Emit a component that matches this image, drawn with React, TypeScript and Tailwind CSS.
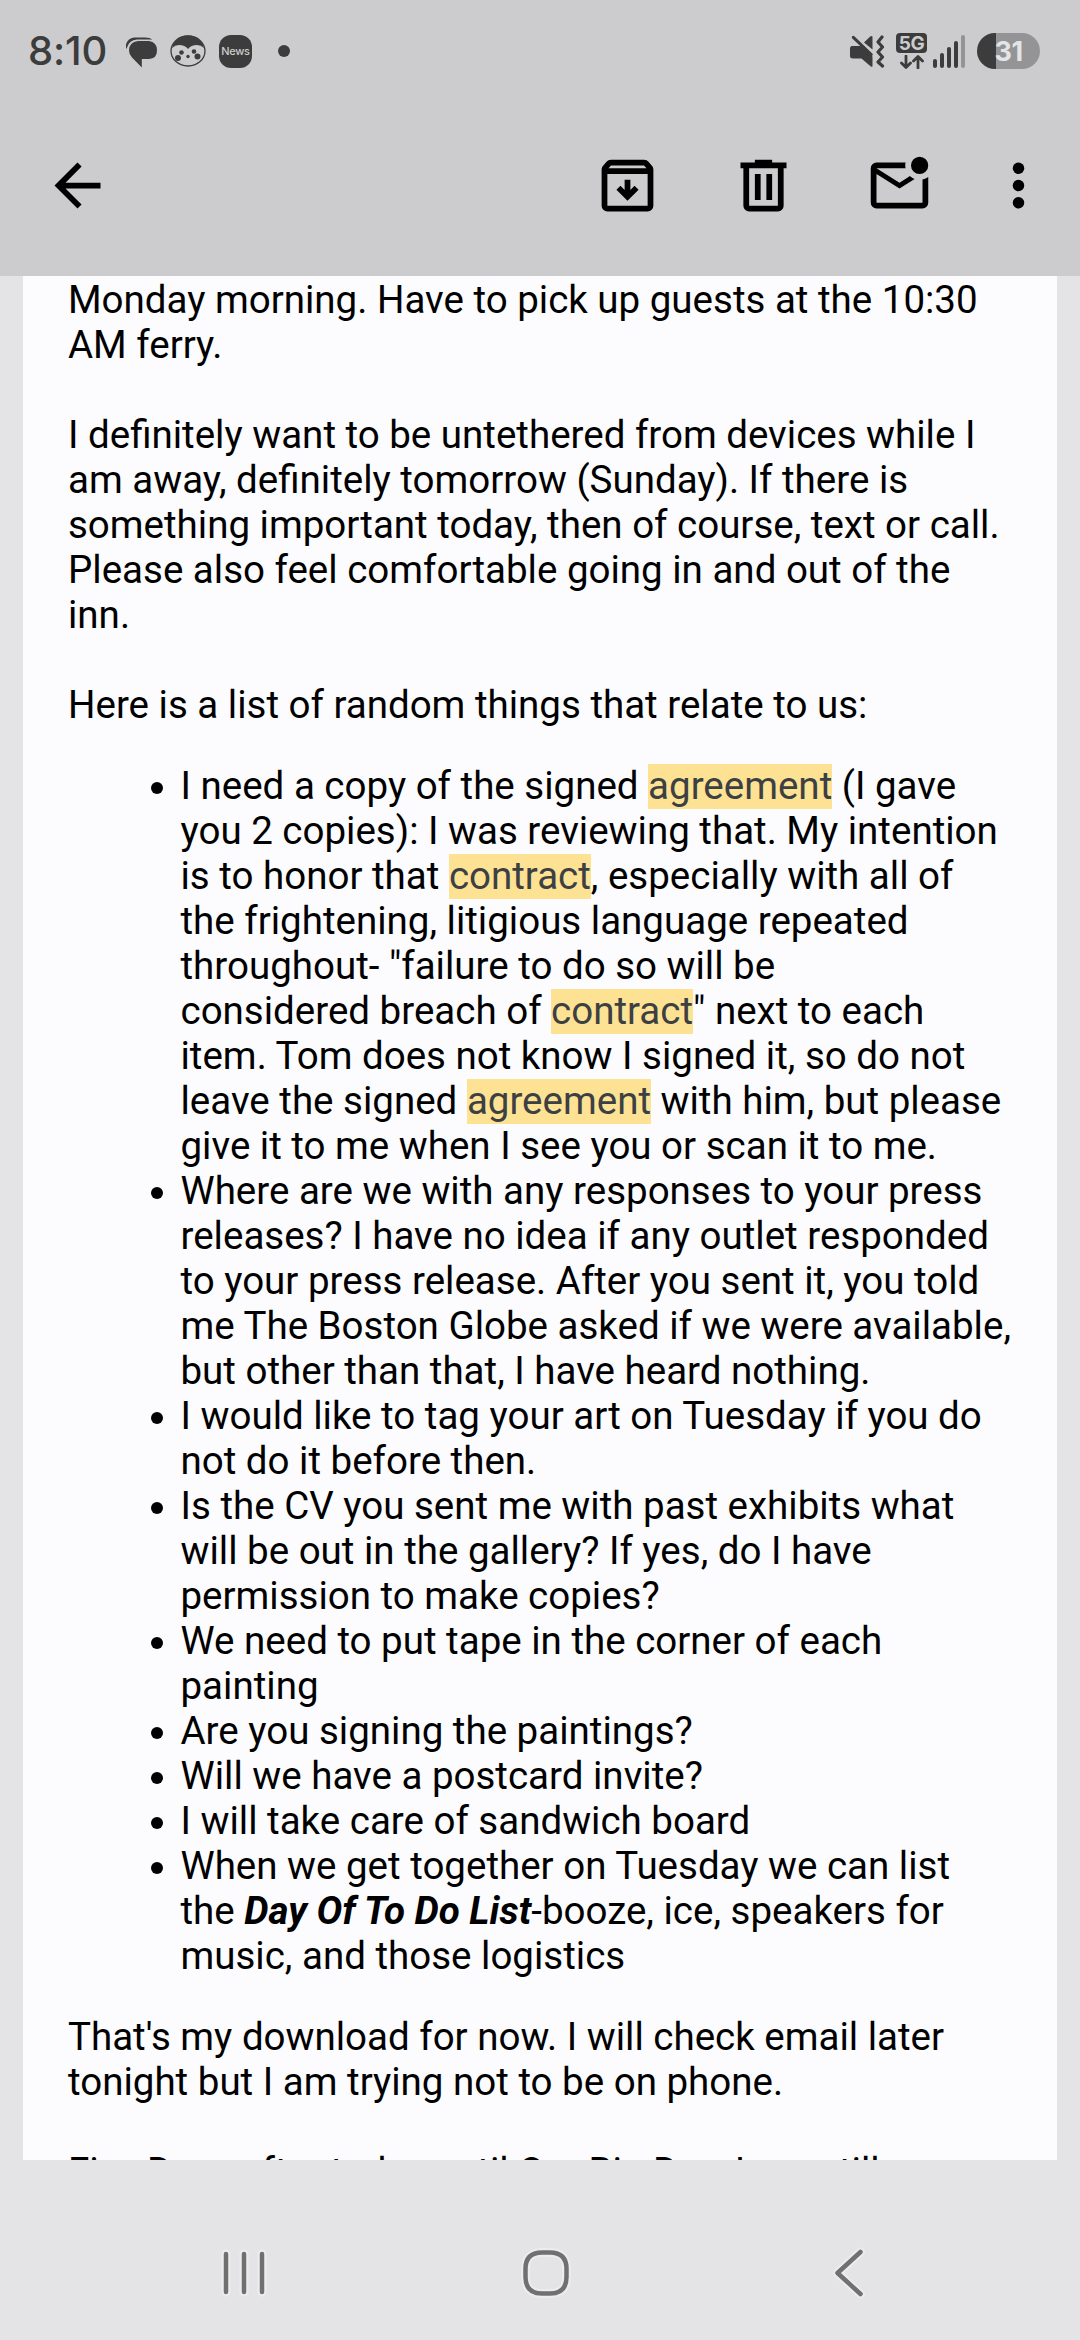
import React from "react";

const Line = ({ children }: { children?: React.ReactNode }) => (
  <span className="block h-[45px] leading-[43px] whitespace-pre">{children}</span>
);

const Mark = ({ children }: { children: React.ReactNode }) => (
  <mark className="inline-block h-[45px] bg-[#fde293] align-top text-[#3c4043]">{children}</mark>
);

const items: React.ReactNode[][] = [
  [
    <>I need a copy of the signed <Mark>agreement</Mark> (I gave</>,
    "you 2 copies): I was reviewing that. My intention",
    <>is to honor that <Mark>contract</Mark>, especially with all of</>,
    "the frightening, litigious language repeated",
    'throughout- "failure to do so will be',
    <>considered breach of <Mark>contract</Mark>" next to each</>,
    "item. Tom does not know I signed it, so do not",
    <>leave the signed <Mark>agreement</Mark> with him, but please</>,
    "give it to me when I see you or scan it to me.",
  ],
  [
    "Where are we with any responses to your press",
    "releases? I have no idea if any outlet responded",
    "to your press release. After you sent it, you told",
    "me The Boston Globe asked if we were available,",
    "but other than that, I have heard nothing.",
  ],
  ["I would like to tag your art on Tuesday if you do", "not do it before then."],
  [
    "Is the CV you sent me with past exhibits what",
    "will be out in the gallery? If yes, do I have",
    "permission to make copies?",
  ],
  ["We need to put tape in the corner of each", "painting"],
  ["Are you signing the paintings?"],
  ["Will we have a postcard invite?"],
  ["I will take care of sandwich board"],
  [
    "When we get together on Tuesday we can list",
    <>the <b className="font-bold italic">Day Of To Do List</b>-booze, ice, speakers for</>,
    "music, and those logistics",
  ],
];

const Paragraph = ({ lines }: { lines: string[] }) => (
  <p>
    {lines.map((l, i) => (
      <Line key={i}>{l}</Line>
    ))}
  </p>
);

const Icon = ({ className, children }: { className: string; children: React.ReactNode }) => (
  <svg viewBox="0 0 24 24" className={`h-[69px] w-[69px] shrink-0 ${className}`} fill="#000">
    {children}
  </svg>
);

function StatusBar() {
  return (
    <div className="flex h-[102px] items-center text-[#3c3c3c]">
      <div className="ml-[28px] w-[98px] font-['Inter'] text-[40px] leading-[48px] font-medium tracking-[-0.1px]">8:10</div>
      <svg viewBox="0 0 32 32" className="mt-1 h-8 w-8" fill="#3c3c3c">
        <path d="M12 4H23q8 1 8 9.500 0 8-8 8.500H15.800v8.500L6 20.500Q3 17.500 3 13.500 3 5 12 4z" />
        <path d="M0 12V7.500Q2 1 8 .5H19q5 0 7.500 2H11Q3 3 .8 11z" />
      </svg>
      <svg viewBox="0 0 36 34" className="ml-[12px] h-[34px] w-9">
        <ellipse cx="18" cy="17" rx="17" ry="15" fill="#ccccce" stroke="#3c3c3c" strokeWidth="1.300" />
        <path d="M2 14Q5 1.500 18 1.500T34 14Q31 11 27 11 21 11 18 15 15 11 9 11 5 11 2 14z" fill="#3c3c3c" />
        <g fill="#3c3c3c">
          <circle cx="11.500" cy="18.500" r="2.300" />
          <circle cx="24" cy="17.500" r="2.300" />
          <circle cx="8" cy="24" r="3" />
          <circle cx="27.500" cy="22.500" r="3" />
          <circle cx="18" cy="22.500" r="1.700" />
        </g>
      </svg>
      <div className="ml-[13px] flex h-[33px] w-[33px] items-center justify-center rounded-[12px] bg-[#3c3c3c] font-['Inter'] text-[11px] leading-none font-medium tracking-[-0.3px] text-[#ccccce]">
        News
      </div>
      <div className="ml-[26px] h-3 w-3 rounded-full bg-[#3c3c3c]" />
      <div className="ml-auto flex items-center">
        <svg viewBox="0 0 36 34" className="h-[34px] w-9" fill="#3c3c3c">
          <path d="M3 12h9l11.500 10.500v9.500q0 1.500-2 .3L12.500 24.500H4Q1 24.500 1 22V15q0-3 2-3zM15 8.500L21.200 2.500q2.300-1.500 2.300.8V15.500z" />
          <path d="M4.300 3.300l18 17.200" stroke="#3c3c3c" strokeWidth="3" strokeLinecap="round" />
          <path d="M33 3l-4 5 4.500 5-4.500 5 4.500 5-4.500 5 4.500 4" fill="none" stroke="#3c3c3c" strokeWidth="3.200" strokeLinecap="round" strokeLinejoin="round" />
        </svg>
        <div className="ml-[11px] flex h-9 w-[31px] flex-col items-center">
          <div className="flex h-5 w-[31px] items-center justify-center rounded-[4px] bg-[#3c3c3c] font-['Inter'] text-[19px] leading-none font-bold tracking-[-0.5px] text-[#ccccce]">5G</div>
          <svg viewBox="0 0 24 14" className="mt-[2px] h-[14px] w-6" fill="none" stroke="#3c3c3c" strokeWidth="2.800" strokeLinecap="round" strokeLinejoin="round">
            <path d="M6 1v11M1.500 8L6 12.500 10.500 8M18 13V2M13.500 6L18 1.500 22.500 6" />
          </svg>
        </div>
        <div className="ml-[6px] flex h-[34px] items-end gap-[3px]">
          <span className="h-[9px] w-1 rounded-full bg-[#3c3c3c]" />
          <span className="h-[15px] w-1 rounded-full bg-[#3c3c3c]" />
          <span className="h-[21px] w-1 rounded-full bg-[#3c3c3c]" />
          <span className="h-[27px] w-1 rounded-full bg-[#3c3c3c]" />
          <span className="h-[33px] w-1 rounded-full bg-[#949496]" />
        </div>
        <div className="mr-[40px] ml-[12px] flex h-9 w-[63px] items-center justify-center rounded-full bg-[linear-gradient(to_right,#3c3c3c_19px,#949496_19px)] font-['Inter'] text-[27px] leading-none font-bold tracking-[-0.5px] text-[#e4e4e6]">
          31
        </div>
      </div>
    </div>
  );
}

function Toolbar() {
  return (
    <div className="flex h-[174px] pt-[49px]">
      <Icon className="ml-[43px]">
        <path d="M20 11H7.830l5.590-5.590L12 4l-8 8 8 8 1.410-1.410L7.830 13H20z" />
      </Icon>
      <Icon className="ml-[481px]">
        <path
          fillRule="evenodd"
          d="M5 21q-.825 0-1.412-.588T3 19V6.525q0-.35.112-.675t.338-.6l1.250-1.525q.275-.35.688-.537T6.250 3h11.500q.45 0 .863.188t.687.537l1.250 1.525q.225.275.338.6t.112.675V19q0 .825-.588 1.412T19 21zM5.400 6h13.200l-.85-1H6.250zM5 8v11h14V8z"
        />
        <path d="M12 17.300L8.150 13.450 9.550 12.100 11 13.550V10h2v3.550l1.450-1.450 1.400 1.350z" />
      </Icon>
      <Icon className="ml-[67px]">
        <path
          fillRule="evenodd"
          d="M9 3h6v1h5v2h-1v13q0 .825-.588 1.412T17 21H7q-.825 0-1.412-.588T5 19V6H4V4h5zM7 6v13h10V6zM9 8h2v9H9zM13 8h2v9h-2z"
        />
      </Icon>
      <Icon className="ml-[67px]">
        <path d="M4 20q-.825 0-1.412-.588T2 18V6q0-.825.588-1.412T4 4h10.100q-.1.500-.1 1t.1 1H4l8 5 3.650-2.275q.35.325.763.575t.862.450L12 13 4 8v10h16V9.900q.575-.125 1.075-.35T22 9v9q0 .825-.588 1.412T20 20zM19 8q-1.250 0-2.125-.875T16 5t.875-2.125T19 2t2.125.875T22 5t-.875 2.125T19 8z" />
      </Icon>
      <Icon className="ml-[50px]">
        <circle cx="12" cy="6" r="2" />
        <circle cx="12" cy="12" r="2" />
        <circle cx="12" cy="18" r="2" />
      </Icon>
    </div>
  );
}

function NavBar() {
  const shapes = [
    { cls: "ml-[216px] w-[56px]", vb: "0 0 56 60", d: "M10 11v38M28 11v38M46 11v38" },
    { cls: "ml-[244px] w-[60px]", vb: "0 0 60 60", d: "M26 9.500h8q16.500 0 16.500 16.500v8q0 16.500-16.500 16.500h-8Q9.500 50.500 9.500 34v-8Q9.500 9.500 26 9.500z" },
    { cls: "ml-[249px] w-[50px]", vb: "0 0 50 60", d: "M35.500 9L12.500 30l23 21" },
  ];
  return (
    <div className="flex h-[180px] pt-[83px]">
      {shapes.map((s) => (
        <svg key={s.d} viewBox={s.vb} className={`h-[60px] shrink-0 ${s.cls}`} fill="none" strokeLinecap="round" strokeLinejoin="round">
          <path d={s.d} stroke="#ececee" strokeWidth="9" />
          <path d={s.d} stroke="#707070" strokeWidth="4.500" />
        </svg>
      ))}
    </div>
  );
}

export default function App() {
  return (
    <div className="flex h-[2340px] w-[1080px] flex-col overflow-hidden bg-[#e4e4e6]">
      <header className="h-[276px] shrink-0 bg-[#ccccce]">
        <StatusBar />
        <Toolbar />
      </header>
      <main className="mx-[23px] h-[1884px] shrink-0 overflow-hidden bg-[#fcfcfe] pt-[2px] pl-[45px] font-['Roboto'] text-[38.5px] text-black">
        <Paragraph lines={["Monday morning. Have to pick up guests at the 10:30", "AM ferry.", ""]} />
        <Paragraph
          lines={[
            "I definitely want to be untethered from devices while I",
            "am away, definitely tomorrow (Sunday). If there is",
            "something important today, then of course, text or call.",
            "Please also feel comfortable going in and out of the",
            "inn.",
            "",
            "Here is a list of random things that relate to us:",
          ]}
        />
        <ul className="my-9 pl-[112.5px]">
          {items.map((lines, i) => (
            <li key={i} className="relative">
              <span className="absolute top-[18px] left-[-29.5px] h-3 w-3 rounded-full bg-black" />
              {lines.map((l, j) => (
                <Line key={j}>{l}</Line>
              ))}
            </li>
          ))}
        </ul>
        <Paragraph
          lines={[
            "That's my download for now. I will check email later",
            "tonight but I am trying not to be on phone.",
            "",
            "Five Days after today until Our Big Day. I am still",
          ]}
        />
      </main>
      <NavBar />
    </div>
  );
}
